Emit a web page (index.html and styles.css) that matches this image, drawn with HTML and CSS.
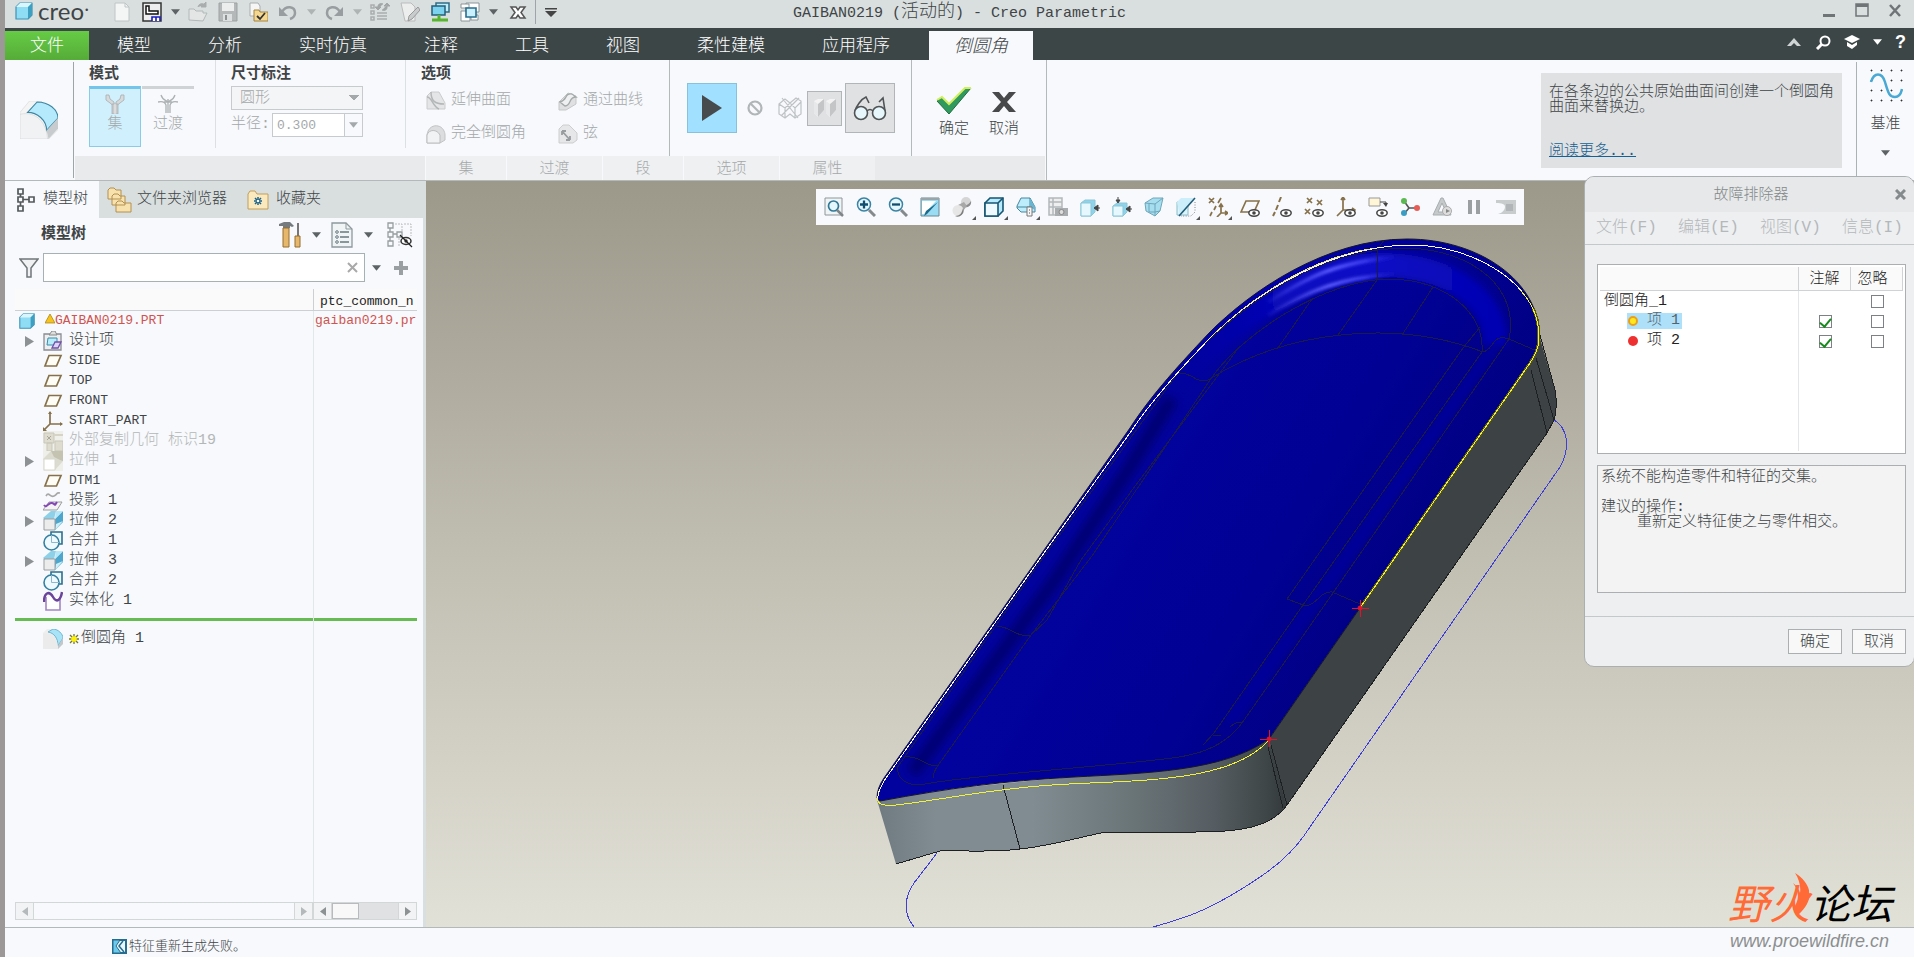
FILE: index.html
```html
<!DOCTYPE html>
<html lang="zh-CN">
<head>
  <meta charset="UTF-8">
  <meta name="viewport" content="width=device-width, initial-scale=1.0">
  <title>GAIBAN0219 (活动的) - Creo Parametric</title>
  <link rel="stylesheet" href="styles.css">
</head>
<body>
  <!-- shared icon symbols -->
  <svg class="defs" width="0" height="0" aria-hidden="true">
    <symbol id="i-caret" viewBox="0 0 10 6"><path d="M0 0h10L5 6z" fill="currentColor"/></symbol>
    <symbol id="i-expand" viewBox="0 0 9 11"><path d="M0 0l9 5.500L0 11z" fill="#8d9194"/></symbol>
    <symbol id="i-part" viewBox="0 0 20 20">
      <path d="M2 6l4-4h12v12l-4 4H2z" fill="#8fdcf5" stroke="#3f93b5" stroke-width="1.200" stroke-linejoin="round"/>
      <path d="M2 6l4-4h12l-4 4z" fill="#d9f6ff"/><path d="M14 6l4-4v12l-4 4z" fill="#3f9fc0"/>
    </symbol>
    <symbol id="i-plane" viewBox="0 0 20 20"><path d="M6 4.500h12L13.500 15H2z" fill="#fffdf5" stroke="#86714a" stroke-width="1.700"/></symbol>
    <symbol id="i-extrude" viewBox="0 0 20 20">
      <path d="M0 7L8 0h12v12l-8 8z" fill="#e9f7fc"/><path d="M0 7L8 0h5L11 8H1z" fill="#8ed0e8"/>
      <path d="M20 0L12 8v11l8-8z" fill="#4fa6cc"/><path d="M13 0h7l-8 8z" fill="#b8e8f7"/><path d="M12 19l8-9-7 3z" fill="#cdf1fb"/>
      <path d="M1 8h11v11H1z" fill="#ececec" stroke="#9b9fa2"/>
    </symbol>
    <symbol id="i-merge" viewBox="0 0 20 20">
      <path d="M8 4V1h11v12h-3" fill="#eaf8fd" stroke="#2c6f8c" stroke-width="1.600"/>
      <circle cx="8.500" cy="11.500" r="7.500" fill="#eefaff" stroke="#3680a0" stroke-width="1.600"/>
      <path d="M8.500 4v7.500H16" fill="none" stroke="#8eb9ca"/>
    </symbol>
    <symbol id="i-round" viewBox="0 0 20 20">
      <path d="M0 4L4 0h7l9 8v7l-5 5H0z" fill="#eeeeee"/>
      <path d="M5 3l5-3c5 0 10 5 10 9l-5 8C15 9 11 4 5 3z" fill="#a8e3f8" stroke="#58a9c8" stroke-width=".8"/>
      <path d="M15 17l5-8v6l-5 5z" fill="#c4c8ca"/>
      <path d="M0 5c9-2 15 4 15 15H0z" fill="#ebebec"/>
    </symbol>
    <symbol id="i-eye" viewBox="0 0 12 8"><ellipse cx="6" cy="4" rx="5.200" ry="3.200" fill="#fff" stroke="#444" stroke-width="1.500"/><circle cx="6" cy="4" r="1.800" fill="#444"/></symbol>
  </svg>

  <header class="titlebar">
    <div class="brand">
      <svg class="icon" viewBox="0 0 20 20"><use href="#i-part"/></svg>
      <span class="brand-name">creo</span><span class="brand-dot">•</span>
    </div>
    <nav class="quick" aria-label="快速访问">
      <button aria-label="新建"><svg class="icon" viewBox="0 0 20 20"><path d="M3 1h10l4 4v14H3z" fill="#f4f6f6" stroke="#c0c4c6"/><path d="M13 1v4h4" fill="none" stroke="#c0c4c6"/></svg></button>
      <button aria-label="打开上次"><svg class="icon" viewBox="0 0 20 20"><rect x="1" y="1" width="18" height="18" fill="#eee" stroke="#333" stroke-width="1.500"/><path d="M4 4h3v5h9v3H4z" fill="#fff" stroke="#111" stroke-width="1.500"/><path d="M10 19v-4h8v4M14 15v4" fill="#fff" stroke="#1c1cc0" stroke-width="1.600"/></svg></button>
      <button class="drop" aria-label="更多"><svg class="caret"><use href="#i-caret"/></svg></button>
      <button aria-label="打开"><svg class="icon" viewBox="0 0 20 20"><path d="M1 18V7h5l2 2h7v2h4l-4 8z" fill="#e4e6e6" stroke="#b3b7b8"/><path d="M10 5c1-4 5-4 7-2M18 0v5h-5z" fill="#a9adae" stroke="#a9adae"/></svg></button>
      <button aria-label="保存"><svg class="icon" viewBox="0 0 20 20"><path d="M1 1h18v18H1z" fill="#b4b8b9" stroke="#9da1a2"/><path d="M4 1h12v8H4z" fill="#eceeee"/><path d="M5 12h9v7H5z" fill="#dde0e0"/><path d="M7 13h2v5H7z" fill="#8e9293"/></svg></button>
      <button aria-label="检入"><svg class="icon" viewBox="0 0 20 20"><path d="M2 1h8l2 3v10H2z" fill="#f6f6f6" stroke="#a9adae"/><path d="M6 8h5l1 2h8v9H6z" fill="#f4d891" stroke="#a5843c"/><path d="M9 14l3 3 5-6" fill="none" stroke="#333" stroke-width="1.800"/></svg></button>
      <button aria-label="撤消"><svg class="icon" viewBox="0 0 20 20"><path d="M4 10C8 3 17 4 17 11c0 3-2 5-5 6" fill="none" stroke="#989d9f" stroke-width="2.500"/><path d="M1 5v9h9z" fill="#989d9f"/></svg></button>
      <button class="drop dim" aria-label="撤消列表"><svg class="caret"><use href="#i-caret"/></svg></button>
      <button aria-label="重做"><svg class="icon" viewBox="0 0 20 20"><path d="M16 10C12 3 3 4 3 11c0 3 2 5 5 6" fill="none" stroke="#989d9f" stroke-width="2.500"/><path d="M19 5v9h-9z" fill="#989d9f"/></svg></button>
      <button class="drop dim" aria-label="重做列表"><svg class="caret"><use href="#i-caret"/></svg></button>
      <button aria-label="重新生成"><svg class="icon" viewBox="0 0 20 20"><path d="M1 3h3v3H1zM1 9h3v3H1zM1 15h3v3H1zM7 11h10M7 14h10M7 17h10" fill="none" stroke="#a9adae" stroke-width="1.500"/><path d="M8 7V4c0-2 3-3 5-2M17 3v3c0 2-3 3-5 2M5 5h6L8 8zM14 4h6l-3-3z" fill="#a2a6a7" stroke="#a2a6a7"/></svg></button>
      <button aria-label="编辑"><svg class="icon" viewBox="0 0 20 20"><path d="M1 1h10l4 4v14H5z" fill="#eceeee" stroke="#bbb"/><path d="M8 19l1-5 9-9 2 3-8 9z" fill="#c9cccd" stroke="#999"/></svg></button>
      <button aria-label="窗口"><svg class="icon" viewBox="0 0 20 20"><path d="M6 1h13v9H6z" fill="#bfeefb" stroke="#316d86" stroke-width="1.500"/><path d="M2 4h13v9H2z" fill="#7cd3ef" stroke="#265f79" stroke-width="1.500"/><path d="M9 13v6M2 18h16" stroke="#58b52f" stroke-width="3"/></svg></button>
      <button aria-label="激活窗口"><svg class="icon" viewBox="0 0 20 20"><path d="M6 1h13v9H6zM1 9h9v10H1z" fill="#fff" stroke="#8a9497"/><path d="M1 2h8v4H1zM11 13h7v5h-7z" fill="#fff" stroke="#8a9497"/><path d="M6 6h10v9H6z" fill="#c9f0fc" stroke="#286f8d" stroke-width="1.600"/></svg></button>
      <button class="drop" aria-label="窗口列表"><svg class="caret"><use href="#i-caret"/></svg></button>
      <button class="close-win" aria-label="关闭窗口"><svg class="icon" viewBox="0 0 20 20"><path d="M3 5h5l2 3 2-3h5l-4 5.500 4 5.500h-5l-2-3-2 3H3l4-5.500z" fill="#fff" stroke="#555" stroke-width="1.500"/></svg></button>
      <span class="quick-line"></span>
      <button class="drop" aria-label="自定义"><svg class="caret tall" viewBox="0 0 12 9"><path d="M0 0h12v1.500H0zM0 3h12L6 9z" fill="#444"/></svg></button>
    </nav>
    <h1 class="title">GAIBAN0219 (<span class="cn">活动的</span>) - Creo Parametric</h1>
    <div class="window-buttons">
      <button aria-label="最小化"><svg viewBox="0 0 14 14"><path d="M1 11h12v3H1z" fill="#6f7577"/></svg></button>
      <button aria-label="最大化"><svg viewBox="0 0 14 14"><path d="M1 1h12v12H1z" fill="none" stroke="#6f7577" stroke-width="1.500"/><path d="M1 1h12v3H1z" fill="#6f7577"/></svg></button>
      <button aria-label="关闭"><svg viewBox="0 0 14 14"><path d="M2 2l10 11M12 2L2 13" stroke="#6f7577" stroke-width="2.500"/></svg></button>
    </div>
  </header>

  <nav class="tabs">
    <button class="file-tab">文件</button>
    <button>模型</button><button>分析</button><button>实时仿真</button><button>注释</button><button>工具</button><button>视图</button><button>柔性建模</button><button>应用程序</button>
    <button class="active">倒圆角</button>
    <div class="tab-tools">
      <button aria-label="折叠功能区"><svg viewBox="0 0 16 16"><path d="M1 12l7-8 7 8h-4L8 9l-3 3z" fill="#cfd4d4"/></svg></button>
      <button aria-label="搜索"><svg viewBox="0 0 16 16"><circle cx="10" cy="7" r="4.500" fill="none" stroke="#fff" stroke-width="2"/><path d="M7 10l-5 5" stroke="#fff" stroke-width="3"/></svg></button>
      <button aria-label="学习"><svg viewBox="0 0 16 16"><path d="M8 1l8 4-8 4-8-4zM3 8l5 3 5-3v3l-5 4-5-3z" fill="#fff"/></svg></button>
      <button class="small" aria-label="学习列表"><svg class="caret"><use href="#i-caret"/></svg></button>
      <button class="help" aria-label="帮助">?</button>
    </div>
  </nav>

  <section class="ribbon">
    <div class="ribbon-icon">
      <svg viewBox="0 0 20 20"><path d="M0 6L5 0h6l9 9v6l-5 5H0z" fill="#f4f4f4" stroke="#d5d5d5" stroke-width=".3"/><path d="M4 6l5-5.500c6 0 11 4 11 8.500l-6 6.500C14 10 9 6 4 6z" fill="#b5eafc" stroke="#3e86a3" stroke-width=".6"/><path d="M14 15.500L20 9v5.500L15 20z" fill="#c7cbcd"/><path d="M0 7c9-2 14 5 14.500 13H0z" fill="#f1f2f3" stroke="#cfd1d3" stroke-width=".3"/></svg>
    </div>
    <div class="ribbon-body">
      <div class="groups">
        <div class="group mode">
          <h2>模式</h2>
          <div class="mode-buttons">
            <button class="on"><svg viewBox="0 0 20 20"><path d="M1 1h3l1 4 4 3v4L1 6zM19 1h-3l-1 4-4 3v4l8-6z" fill="#d6dadc" stroke="#a7acaf" stroke-width=".8"/><path d="M7 10h6v10H7z" fill="#c6cacc" stroke="#aaafb2" stroke-width=".8"/><path d="M10 10v10" stroke="#eee"/></svg>集</button>
            <button><svg viewBox="0 0 20 20"><path d="M3 1c2 6 5 5 7 7 2-2 5-1 7-7M0 8c4-1 7 0 8 3v8M20 8c-4-1-7 0-8 3v8M10 5v14M6 8h8" fill="none" stroke="#adb1b3" stroke-width="1.300"/></svg>过渡</button>
          </div>
        </div>
        <div class="group dims">
          <h2>尺寸标注</h2>
          <select class="shape" aria-label="形状" disabled><option>圆形</option></select>
          <div class="radius">
            <label for="radius">半径:</label>
            <input id="radius" type="text" value="0.300" disabled><button aria-label="半径列表" disabled><svg class="caret"><use href="#i-caret"/></svg></button>
          </div>
        </div>
        <div class="group opts">
          <h2>选项</h2>
          <div class="opt-grid">
            <button><svg viewBox="0 0 20 20"><path d="M1 5l4-4h8l6 11v6H1z" fill="#e4e5e6" stroke="#cacccd"/><path d="M5 1c0 9 4 12 13 12M1 6c5 0 6 10 12 12" fill="none" stroke="#b3b7b8" stroke-width="1.500"/></svg>延伸曲面</button>
            <button><svg viewBox="0 0 20 20"><path d="M1 11L10 2l8 3v8l-10 6H1z" fill="#dfe0e1" stroke="#c5c7c8"/><path d="M2 11c8-2 4-9 12-8l4 3c-8 0-4 8-11 9z" fill="#eef0f1" stroke="#a5a9aa" stroke-width="1.300"/></svg>通过曲线</button>
            <button><svg viewBox="0 0 20 20"><path d="M1 11c1-8 7-10 11-9 5 1 7 6 7 9v5l-5 3H1z" fill="#dcddde" stroke="#c1c4c5"/><path d="M1 19v-8c2-6 10-6 13 0v8z" fill="#f1f2f3" stroke="#bbbebf"/></svg>完全倒圆角</button>
            <button><svg viewBox="0 0 20 20"><path d="M1 5l4-4h6l8 8v7l-4 3H1z" fill="#e6e7e8" stroke="#cccecf"/><path d="M4 7l8 9M4 7v4M4 7h4M12 16V12M12 16H8" fill="none" stroke="#999da0" stroke-width="1.800"/></svg>弦</button>
          </div>
        </div>
        <div class="group view">
          <button class="play" aria-label="继续"><svg width="24" height="30" viewBox="0 0 24 30"><path d="M2 2l20 13L2 28z" fill="#474b4d"/></svg></button>
          <button class="bare" aria-label="无预览"><svg width="18" height="18" viewBox="0 0 18 18"><circle cx="9" cy="9" r="6.500" fill="none" stroke="#b1b5b7" stroke-width="2.200"/><path d="M5 5l8 8" stroke="#b1b5b7" stroke-width="2.200"/></svg></button>
          <button class="bare wide" aria-label="分离"><svg width="26" height="24" viewBox="0 0 26 24"><path d="M2 8l6-5 5 4 6-5 5 3v13l-6 4-5-4-5 4-6-4zM2 8l6 4 5-5 5 5 6-6M8 12v10M18 12v10M5 2l16 20M22 2L4 20" fill="none" stroke="#bfc2c4" stroke-width="1.200"/></svg></button>
          <button class="solid" aria-label="连接"><svg width="24" height="20" viewBox="0 0 24 20"><path d="M1 3l4-2h6v11l-6 7-4-4zM13 3l4-2h6v11l-6 7-4-4z" fill="#f3f3f4"/><path d="M5 6l6-5v11l-6 7zM17 6l6-5v11l-6 7z" fill="#c3c5c7"/><path d="M1 3l4 3v13l-4-4zM13 3l4 3v13l-4-4z" fill="#e7e8e9"/></svg></button>
          <button class="glasses" aria-label="预览"><svg width="34" height="26" viewBox="0 0 34 26"><path d="M2 16c1-4 6-12 11-14l3 6M32 16L30 3l-4 4" fill="none" stroke="#4f5355" stroke-width="1.600"/><circle cx="8" cy="18" r="6.500" fill="#e7f6fb" stroke="#4f5355" stroke-width="1.600"/><circle cx="26" cy="18" r="6.500" fill="#e7f6fb" stroke="#4f5355" stroke-width="1.600"/><path d="M14 16c2-2 4-2 6 0" fill="none" stroke="#4f5355" stroke-width="1.600"/></svg></button>
        </div>
        <div class="group finish">
          <button><svg width="36" height="28" viewBox="0 0 36 28"><path d="M1 14l5-4 7 7L29 1h6L13 27z" fill="#2f9a5c" stroke="#1f6e40"/><path d="M1 13l5-3 7 7L29 1h6" fill="none" stroke="#d3ee5c" stroke-width="2"/></svg>确定</button>
          <button><svg width="36" height="28" viewBox="0 0 36 28"><path d="M6 5h7l5 6 5-6h7l-9 10 9 10h-7l-5-6-5 6H6l9-10z" fill="#47494b"/></svg>取消</button>
        </div>
      </div>
      <div class="panels">
        <button>集</button><button class="w2">过渡</button><button>段</button><button class="w2">选项</button><button class="w2">属性</button>
      </div>
    </div>
    <aside class="tip">
      <p>在各条边的公共原始曲面间创建一个倒圆角曲面来替换边。</p>
      <a href="#">阅读更多...</a>
    </aside>
    <button class="datum">
      <svg class="datum-icon" viewBox="0 0 34 36"><path d="M2 2h1v1H2zM12 2h1v1h-1zM22 2h1v1h-1zM32 2h1v1h-1zM2 12h1v1H2zM22 12h1v1h-1zM32 12h1v1h-1zM2 22h1v1H2zM12 22h1v1h-1zM22 22h1v1h-1zM2 32h1v1H2zM12 32h1v1h-1zM22 32h1v1h-1zM32 32h1v1h-1z" fill="#333" stroke="#333" stroke-width=".8"/><path d="M2 14C5 4 13 4 16 14s4 15 10 15c4 0 6-3 7-8" fill="none" stroke="#49a9d4" stroke-width="2.500"/></svg>
      基准
      <svg class="caret"><use href="#i-caret"/></svg>
    </button>
  </section>

  <main class="main">
    <section class="side">
      <nav class="side-tabs">
        <button class="active"><svg width="20" height="26" viewBox="0 0 20 26"><path d="M2 2h5v5H2zM2 10h5v5H2zM2 19h5v5H2zM13 10h5v5h-5zM4.500 7v3M4.500 15v4M7 12.500h6" fill="none" stroke="#55595b" stroke-width="1.700"/></svg>模型树</button>
        <button class="folders"><svg width="25" height="26" viewBox="0 0 25 26"><path d="M1 3l2-2h4l2 2h5v9H1zM5 9l2-2h4l2 2h5v9H5zM9 16l2-2h4l2 2h7v9H9z" fill="#f7e2ae" stroke="#b3904f"/></svg>文件夹浏览器</button>
        <button class="fav"><svg width="22" height="22" viewBox="0 0 22 22"><path d="M1 5l2-3h5l2 3h11v15H1z" fill="#fae9bf" stroke="#c39d57"/><path d="M11 8v8M7 12h8M8 9l6 6M14 9l-6 6" stroke="#1a6287" stroke-width="1.500"/><circle cx="11" cy="12" r="1.300" fill="#fff"/></svg>收藏夹</button>
      </nav>
      <div class="side-head">
        <h2>模型树</h2>
        <button aria-label="设置"><svg width="22" height="26" viewBox="0 0 22 26"><path d="M0 2l5-2h6l4 4-2 1-2-1v2H4V4H0z" fill="#757b7e"/><path d="M4 6h6v19H4z" fill="#e7b86c" stroke="#966c2e"/><path d="M18 1h2v14h-2z" fill="#777"/><path d="M16 14h5v11h-5z" fill="#e7b86c" stroke="#966c2e"/></svg></button>
        <button class="drop" aria-label="设置列表"><svg class="caret"><use href="#i-caret"/></svg></button>
        <button aria-label="显示"><svg width="22" height="26" viewBox="0 0 22 26"><path d="M1 1h14l6 6v18H1z" fill="#f0f4f5" stroke="#8d999d" stroke-width="1.300"/><path d="M15 1v6h6" fill="none" stroke="#8d999d"/><path d="M9 10h9M9 15h9M9 20h9" stroke="#64787f" stroke-width="1.300"/><circle cx="6" cy="10" r="1.300" fill="none" stroke="#64787f"/><circle cx="6" cy="15" r="1.300" fill="none" stroke="#64787f"/><circle cx="6" cy="20" r="1.300" fill="none" stroke="#64787f"/></svg></button>
        <button class="drop" aria-label="显示列表"><svg class="caret"><use href="#i-caret"/></svg></button>
        <button class="hide" aria-label="隐藏"><svg width="26" height="26" viewBox="0 0 26 26"><path d="M1 1h5v5H1zM1 10h5v5H1zM1 19h5v5H1zM10 10h5v5h-5zM3 6v4M3 15v4M6 12h4" fill="none" stroke="#989d9f" stroke-width="1.300"/><path d="M8 2h7v7M17 2h7v12M12 16v8" fill="none" stroke="#bbb" stroke-dasharray="2 1"/><ellipse cx="19" cy="19" rx="5" ry="3.500" fill="#fff" stroke="#333" stroke-width="1.500"/><circle cx="19" cy="19" r="1.700" fill="#333"/><path d="M13 13l12 12" stroke="#222" stroke-width="1.300"/></svg></button>
      </div>
      <div class="filter">
        <svg class="funnel" viewBox="0 0 20 20"><path d="M1 1h18l-7 9v9H8v-9z" fill="#f0f1f2" stroke="#6f7678" stroke-width="1.500"/></svg>
        <div class="search"><input type="text" aria-label="搜索模型树"><button aria-label="清除"><svg width="11" height="11" viewBox="0 0 11 11"><path d="M1 1l9 9M10 1l-9 9" stroke="#a9a9a9" stroke-width="2"/></svg></button></div>
        <button class="drop" aria-label="过滤列表"><svg class="caret"><use href="#i-caret"/></svg></button>
        <button class="plus" aria-label="添加"><svg width="14" height="14" viewBox="0 0 14 14"><path d="M5 0h4v5h5v4H9v5H5V9H0V5h5z" fill="#9a9fa1"/></svg></button>
      </div>
      <table class="tree">
        <thead><tr><th></th><th>ptc_common_n</th></tr></thead>
        <tbody>
          <tr class="root"><td><div><svg class="icon"><use href="#i-part"/></svg><svg class="warn" viewBox="0 0 10 14"><path d="M5 0l5 9H0z" fill="#f6c21c" stroke="#a57b0b" stroke-width=".7"/></svg>GAIBAN0219.PRT</div></td><td>gaiban0219.pr</td></tr>
          <tr><td><div><svg class="expand"><use href="#i-expand"/></svg><svg class="icon" viewBox="0 0 20 20"><path d="M1 3h17v16H1z" fill="#eee" stroke="#8b8b94" stroke-width="1.300"/><path d="M6 4l3-4h3l2 4z" fill="#ddd" stroke="#888"/><path d="M5 7h9v7H4z" fill="#b9ecfa" stroke="#388cab"/><path d="M9 17l3-6h6l-3 6z" fill="#ddd3f3" stroke="#7150ad" stroke-width="1.300"/></svg>设计项</div></td><td></td></tr>
          <tr class="latin"><td><div><svg class="icon"><use href="#i-plane"/></svg>SIDE</div></td><td></td></tr>
          <tr class="latin"><td><div><svg class="icon"><use href="#i-plane"/></svg>TOP</div></td><td></td></tr>
          <tr class="latin"><td><div><svg class="icon"><use href="#i-plane"/></svg>FRONT</div></td><td></td></tr>
          <tr class="latin"><td><div><svg class="icon" viewBox="0 0 20 20"><path d="M7 1v12h12M7 13l-6 6" fill="none" stroke="#86714a" stroke-width="1.700"/><path d="M5 3l2-3 2 3zM17 11l3 2-3 2zM0 16v4h4z" fill="#86714a"/></svg>START_PART</div></td><td></td></tr>
          <tr class="off"><td><div><svg class="icon" viewBox="0 0 20 20"><path d="M0 0h20v20H0z" fill="#f0f0ea"/><path d="M1 2h10v10H1zM12 10h8v10h-8zM4 12h5v8H4z" fill="#dddccf" stroke="#c9c7b9"/><path d="M11 4h9" stroke="#d6d4c6" stroke-width="2"/><path d="M4 5l4 4M8 5L4 9" stroke="#aaa89b"/></svg>外部复制几何 标识19</div></td><td></td></tr>
          <tr class="off"><td><div><svg class="expand"><use href="#i-expand"/></svg><svg class="icon" viewBox="0 0 20 20"><path d="M0 0h20v20H0z" fill="#efefe9"/><path d="M0 8l8-8h12v10l-8 9z" fill="#dcdbcf"/><path d="M8 0h12v10l-3-1-6-3z" fill="#c4c2b1"/><path d="M1 8h11v11H1z" fill="#fff" stroke="#d8d7cc"/></svg>拉伸 1</div></td><td></td></tr>
          <tr class="latin"><td><div><svg class="icon"><use href="#i-plane"/></svg>DTM1</div></td><td></td></tr>
          <tr><td><div><svg class="icon" viewBox="0 0 20 20"><path d="M3 5c3-5 4 2 8 0s2-4 6-3" fill="none" stroke="#a7a7a7" stroke-width="1.700"/><path d="M6 11h13l-5 8H0z" fill="#f4f4f4" stroke="#9c9c9c"/><path d="M1 14c3 4 4-3 8-2s2 4 5-1" fill="none" stroke="#8447b5" stroke-width="2"/></svg>投影 1</div></td><td></td></tr>
          <tr><td><div><svg class="expand"><use href="#i-expand"/></svg><svg class="icon"><use href="#i-extrude"/></svg>拉伸 2</div></td><td></td></tr>
          <tr><td><div><svg class="icon"><use href="#i-merge"/></svg>合并 1</div></td><td></td></tr>
          <tr><td><div><svg class="expand"><use href="#i-expand"/></svg><svg class="icon"><use href="#i-extrude"/></svg>拉伸 3</div></td><td></td></tr>
          <tr><td><div><svg class="icon"><use href="#i-merge"/></svg>合并 2</div></td><td></td></tr>
          <tr><td><div><svg class="icon" viewBox="0 0 20 20"><path d="M3 6v13h14V6" fill="#fff" stroke="#a285c2" stroke-width="1.600"/><path d="M1 11c0-9 5-12 9-5s8 2 9-5" fill="none" stroke="#69449a" stroke-width="2.500"/></svg>实体化 1</div></td><td></td></tr>
          <tr class="insert"><td><span></span></td><td><span></span></td></tr>
          <tr><td><div><svg class="icon"><use href="#i-round"/></svg><svg class="star" viewBox="0 0 10 10"><path d="M5 0v10M0 5h10M1 1l8 8M9 1L1 9" stroke="#77752a" stroke-width="1.300"/><circle cx="5" cy="5" r="2.800" fill="#fff200"/></svg>倒圆角 1</div></td><td></td></tr>
          <tr class="rest"><td></td><td></td></tr>
        </tbody>
      </table>
      <div class="scrolls">
        <div class="scroll name-scroll"><button aria-label="向左" disabled><svg viewBox="0 0 6 9"><path d="M6 0v9L0 4.500z" fill="#b5b9bb"/></svg></button><i></i><button aria-label="向右" disabled><svg viewBox="0 0 6 9"><path d="M0 0v9l6-4.500z" fill="#b5b9bb"/></svg></button></div>
        <div class="scroll col-scroll"><button aria-label="向左"><svg viewBox="0 0 6 9"><path d="M6 0v9L0 4.500z" fill="#8d9193"/></svg></button><i><b></b></i><button aria-label="向右"><svg viewBox="0 0 6 9"><path d="M0 0v9l6-4.500z" fill="#8d9193"/></svg></button></div>
      </div>
    </section>

    <section class="viewport">
      <svg class="model" viewBox="426 181 1488 746" preserveAspectRatio="xMidYMid meet" role="img" aria-label="GAIBAN0219">
        <defs>
          <linearGradient id="front" x1="878" y1="0" x2="1287" y2="0" gradientUnits="userSpaceOnUse">
            <stop offset="0" stop-color="#6f7b80"/><stop offset=".14" stop-color="#808c92"/><stop offset=".38" stop-color="#818c92"/><stop offset=".62" stop-color="#6a7578"/><stop offset=".82" stop-color="#565d62"/><stop offset=".95" stop-color="#3f4647"/><stop offset="1" stop-color="#33393a"/>
          </linearGradient>
          <linearGradient id="top" x1="1100" y1="500" x2="1400" y2="680" gradientUnits="userSpaceOnUse">
            <stop offset="0" stop-color="#02029e"/><stop offset=".5" stop-color="#010194"/><stop offset="1" stop-color="#00007e"/>
          </linearGradient>
          <linearGradient id="rim" x1="1180" y1="0" x2="1510" y2="0" gradientUnits="userSpaceOnUse">
            <stop offset="0" stop-color="#0000b4" stop-opacity="0"/><stop offset=".35" stop-color="#0a0ac0"/><stop offset=".55" stop-color="#0c0cc8"/><stop offset="1" stop-color="#0303b0"/>
          </linearGradient>
          <linearGradient id="shine" x1="1260" y1="0" x2="1400" y2="0" gradientUnits="userSpaceOnUse">
            <stop offset="0" stop-color="#5a5aff" stop-opacity="0"/><stop offset=".5" stop-color="#5a5aff"/><stop offset=".75" stop-color="#3c3cf0"/><stop offset="1" stop-color="#1a1ad4" stop-opacity="0"/>
          </linearGradient>
          <filter id="soft" filterUnits="userSpaceOnUse" x="860" y="220" width="720" height="620"><feGaussianBlur stdDeviation="5"/></filter>
          <filter id="glow" filterUnits="userSpaceOnUse" x="860" y="220" width="720" height="620"><feGaussianBlur stdDeviation="3"/></filter>
          <filter id="line-glow" filterUnits="userSpaceOnUse" x="860" y="220" width="720" height="620"><feGaussianBlur stdDeviation="1.500"/></filter>
          <clipPath id="face"><path d="M877 798Q877 788 884 778L1037 560L1130 428C1148 400 1172 372 1210 332C1250 292 1325 239 1407 239C1480 239 1539 282 1539 335Q1539 350 1530 363L1269 739C1222 772 1145 773 1074 777S950 788 880 801Z"/></clipPath>
        </defs>

        <!-- curve projected below the part -->
        <path class="sketch" d="M1554 420C1566 427 1572 445 1560 467L1310 827C1294 852 1276 868 1240 890S1185 918 1153 927M937 853L914 883C904 898 903 913 914 927"/>

        <!-- right and front walls -->
        <path d="M1269 739L1530 363Q1539 350 1539 335L1555 390Q1558 408 1554 420L1547 433L1287 805L1283 808Z" fill="#3d4244"/>
        <path class="edge" d="M1540 335L1555 390Q1558 408 1554 420L1547 433L1287 805M1531 370L1547 433M1536 358L1554 420"/>
        <path d="M877 800C950 788 1003 783 1074 777S1222 772 1269 739L1286 806C1272 826 1245 832 1196 832H1106C1080 837 1050 846 1020 849C990 853 960 850 940 851L896 864Z" fill="url(#front)"/>
        <path class="edge" d="M896 864L940 851C960 850 990 853 1020 849C1050 846 1080 837 1106 832H1196C1245 832 1272 826 1287 805M1003 785L1020 849M1268 747L1283 808M1271 745L1287 805"/>

        <!-- top face -->
        <path d="M877 798Q877 788 884 778L1037 560L1130 428C1148 400 1172 372 1210 332C1250 292 1325 239 1407 239C1480 239 1539 282 1539 335Q1539 350 1530 363L1269 739C1222 772 1145 773 1074 777S950 788 880 801Z" fill="url(#top)" stroke="#14142a"/>
        <g clip-path="url(#face)">
          <path d="M912 773L1053 583L1130 467L1172 398" fill="none" stroke="#000072" stroke-width="14" filter="url(#soft)"/>
          <path d="M1174 384C1225 322 1310 266 1378 265C1450 264 1498 300 1495 345" fill="none" stroke="url(#rim)" stroke-width="24" filter="url(#glow)"/>
          <path d="M1268 302C1310 276 1335 263 1395 257M1268 315C1310 290 1340 278 1395 274" fill="none" stroke="url(#shine)" stroke-width="4" filter="url(#line-glow)"/>
          <path d="M1495 345L1315 602L1230 722" fill="none" stroke="#00009c" stroke-width="8" filter="url(#glow)"/>
        </g>

        <g class="inner">
          <path d="M1178 373C1225 318 1310 248 1407 248C1475 250 1520 290 1509 339L1333 593L1242 723C1215 760 1165 758 1146 761C1060 770 980 775 931 783Q900 790 897 768L1040 562L1178 373"/>
          <path d="M1210 380C1240 335 1325 279 1390 279C1445 280 1485 312 1482 352L1303 605L1214 733L1203 745"/>
          <path d="M1208 380C1290 328 1400 320 1483 352C1494 350 1492 333 1509 339L1537 351M1178 373C1193 372 1195 384 1208 380"/>
          <path d="M1312 299L1278 348M1377 280L1338 335M1433 287L1402 335M1480 327L1463 348L1287 599M1377 250L1378 280M1384 240L1377 250"/>
          <path d="M1287 599L1306 606C1318 604 1320 591 1332 592L1360 604M1237 350L1130 493L1081 560L1047 620L1031 635L939 764Q934 770 933 778M1210 380L1092 556L1031 635"/>
          <path d="M997 626C1012 627 1017 638 1030 635M906 757C920 755 925 768 939 765M1213 735H1221M1230 727Q1238 720 1243 723"/>
        </g>

        <!-- selected edge chain -->
        <path class="chain-back" d="M1533 308Q1539 320 1539 338Q1539 350 1530 363L1360 608"/>
        <path class="chain-far" d="M878 798Q877 792 886 778L1039 560L1132 430C1150 403 1176 373 1213 335C1262 288 1335 246 1410 245C1465 245 1510 272 1528 300"/>
        <path class="chain-mid" d="M1213 335C1262 288 1320 256 1375 248"/>
        <path class="chain" d="M1520 290Q1539 310 1539 338Q1539 350 1530 363L1360 608M1269 740C1228 787 1119 779 1039 786C980 791 940 800 896 805Q876 807 878 798"/>
        <g class="cross"><path d="M1352 608h17M1360 600v17M1260 739h17M1269 730v17"/><circle cx="1360" cy="608" r="2"/><circle cx="1269" cy="739" r="2"/></g>
      </svg>

      <div class="view-tools">
        <button aria-label="重新调整"><svg class="icon" viewBox="0 0 20 20"><path d="M1 1h17v17H1z" fill="#f1f4f5" stroke="#8f9699"/><circle cx="9.500" cy="9" r="5" fill="#e3f7fd" stroke="#2f7898" stroke-width="1.700"/><path d="M13 13l6 6" stroke="#80858a" stroke-width="2.500"/></svg></button>
        <button aria-label="放大"><svg class="icon" viewBox="0 0 20 20"><circle cx="8" cy="7.500" r="6.500" fill="#e3f7fd" stroke="#3b83a3" stroke-width="1.500"/><path d="M13 13l6 6" stroke="#85898c" stroke-width="3"/><path d="M4 7.500h8M8 3.500v8" stroke="#114e6d" stroke-width="2.300"/></svg></button>
        <button aria-label="缩小"><svg class="icon" viewBox="0 0 20 20"><circle cx="8" cy="7.500" r="6.500" fill="#e3f7fd" stroke="#3b83a3" stroke-width="1.500"/><path d="M13 13l6 6" stroke="#85898c" stroke-width="3"/><path d="M4 7.500h8" stroke="#114e6d" stroke-width="2.300"/></svg></button>
        <button aria-label="重画"><svg class="icon" viewBox="0 0 20 20"><path d="M1 1h18v18H1z" fill="#9adcf3" stroke="#6b8792"/><path d="M2 4h14L4 17H2z" fill="#fff"/><path d="M1 1h18v2H1z" fill="#9aa5a9"/><path d="M18 5L7 17l-3 2 2-5z" fill="#1d6a8c"/></svg></button>
        <button class="more" aria-label="渲染"><svg class="icon" viewBox="0 0 20 20"><circle cx="14" cy="5" r="5" fill="#d5d5d5"/><path d="M19 4a5 5 0 0 1-6 6l-2-2c4 1 6-1 8-4z" fill="#8c8c8c"/><path d="M6 8l6-3 3 4-4 5z" fill="#a8a8a8"/><circle cx="6" cy="13.500" r="5.500" fill="#e6e6e6"/><path d="M11 11a6 6 0 0 1-8 8c5 0 7-3 8-8z" fill="#7d7d7d"/></svg></button>
        <button class="more" aria-label="显示样式"><svg class="icon" viewBox="0 0 20 20"><path d="M1 6l5-5h13v13l-5 5H1z" fill="#b7eafa" stroke="#175673" stroke-width="1.600"/><path d="M1 6h13v13H1zM14 6l5-5" fill="#eefaff" stroke="#175673" stroke-width="1.600"/></svg></button>
        <button class="more" aria-label="已保存方向"><svg class="icon" viewBox="0 0 20 20"><path d="M5 1h9l5 9v5H5l-4-4V9z" fill="#bdecfa" stroke="#47879f"/><path d="M1 10h13l5 1M14 1v9" fill="none" stroke="#47879f"/><path d="M14 1l5 9v3l-5-3z" fill="#6ab6d2"/><path d="M11 10h5v9h-5z" fill="#f7f7f7" stroke="#777"/><path d="M13 13h1M13 16h1" stroke="#555"/></svg></button>
        <button aria-label="视图管理器"><svg class="icon" viewBox="0 0 20 20"><path d="M1 1h13v17H1zM1 5h13M1 10h13M5 1v17" fill="#eee" stroke="#b4b8ba" stroke-width="1.500"/><path d="M7 11h13v8H7z" fill="#a9adaf"/><circle cx="13.500" cy="15" r="2.500" fill="#ddd" stroke="#888"/></svg></button>
        <button aria-label="截面"><svg class="icon" viewBox="0 0 20 20"><path d="M1 6l4-3h10v12l-4 4H1z" fill="#8fd3ea" stroke="#8cc5d8"/><path d="M1 6h10v13H1z" fill="#e6f8fe" stroke="#8cc5d8"/><path d="M20 11h-3M18 8l-4 3 4 3z" fill="#444" stroke="#444"/></svg></button>
        <button aria-label="截面 2"><svg class="icon" viewBox="0 0 20 20"><path d="M1 9l4-3h10v9l-4 4H1z" fill="#8fd3ea" stroke="#8cc5d8"/><path d="M1 9h10v10H1z" fill="#e6f8fe" stroke="#8cc5d8"/><path d="M20 12h-3M18 9l-4 3 4 3zM6 0v3M4 3l2 3 2-3z" fill="#444" stroke="#444"/></svg></button>
        <button aria-label="透视图"><svg class="icon" viewBox="0 0 20 20"><path d="M1 6l8-5h10l-3 13-5 5-9-5z" fill="#a6ddef" stroke="#6fa6ba"/><path d="M1 6l10 1 8-6M11 7v12M5 7v8h6l5-1" fill="none" stroke="#6fa6ba"/></svg></button>
        <button class="more" aria-label="隐藏线"><svg class="icon" viewBox="0 0 20 20"><path d="M1 5h11v13H1z" fill="#dcf5fc" stroke="#8abccc"/><path d="M1 5l4-4h13L4 18" fill="#cbeefa"/><path d="M19 5v10l-4 4H5" fill="none" stroke="#888" stroke-dasharray="1 1.500"/><path d="M19 1L3 19" stroke="#205b77" stroke-width="1.600"/></svg></button>
        <button class="more" aria-label="基准显示"><svg class="icon" viewBox="0 0 20 20"><path d="M1 1l5 5M6 1L1 6M13 1l-3 5M8 9l-2 4M4 15l-2 4M13 8v8h6M13 16l-4 4M11 10l2-3 2 3M17 14l3 2-3 2" fill="none" stroke="#86714a" stroke-width="1.700"/></svg></button>
        <button aria-label="平面显示"><svg class="icon" viewBox="0 0 20 20"><path d="M6 4h13l-5 11H1z" fill="none" stroke="#86714a" stroke-width="1.700"/><use href="#i-eye" x="8" y="12" width="12" height="8"/></svg></button>
        <button aria-label="轴显示"><svg class="icon" viewBox="0 0 20 20"><path d="M9 0L7 5M6 8l-2 5M3 15l-2 4" stroke="#86714a" stroke-width="2"/><use href="#i-eye" x="8" y="12" width="12" height="8"/></svg></button>
        <button aria-label="点显示"><svg class="icon" viewBox="0 0 20 20"><path d="M3 1l5 5M8 1L3 6M13 3l5 5M18 3l-5 5M1 12l5 5M6 12l-5 5" stroke="#86714a" stroke-width="1.700"/><use href="#i-eye" x="8" y="12" width="12" height="8"/></svg></button>
        <button aria-label="坐标系显示"><svg class="icon" viewBox="0 0 20 20"><path d="M7 1v12h12M7 13l-6 6M5 3l2-3 2 3M16 11l3 2-3 2" fill="none" stroke="#86714a" stroke-width="1.700"/><use href="#i-eye" x="8" y="12" width="12" height="8"/></svg></button>
        <button aria-label="注释显示"><svg class="icon" viewBox="0 0 20 20"><path d="M1 1h11v8H1z" fill="#fff6d8" stroke="#999"/><path d="M12 5h6v2" fill="none" stroke="#444"/><path d="M15 6l3 4 2-4z" fill="#444"/><use href="#i-eye" x="8" y="12" width="12" height="8"/></svg></button>
        <button aria-label="旋转中心"><svg class="icon" viewBox="0 0 20 20"><path d="M4 4l5 7-5 6M9 11h8" fill="none" stroke="#555" stroke-width="1.600"/><circle cx="4" cy="4" r="3" fill="#5bb853"/><circle cx="4" cy="16" r="3" fill="#3a9ec4"/><circle cx="17" cy="11" r="3" fill="#e45e57"/></svg></button>
        <button aria-label="仿真"><svg class="icon" viewBox="0 0 20 20"><path d="M9 1h2l8 17H1zM10 6l-4 9h8z" fill="#c6c9ca" fill-rule="evenodd" stroke="#a9adaf"/><circle cx="15" cy="14" r="4.500" fill="#ddd" stroke="#aaa"/><path d="M14 12l4 2-4 2z" fill="#888"/></svg></button>
        <button aria-label="暂停"><svg class="icon" viewBox="0 0 20 20"><path d="M4 3h4v14H4zM12 3h4v14h-4z" fill="#9b9fa1"/></svg></button>
        <button aria-label="结束"><svg class="icon" viewBox="0 0 20 20"><path d="M0 3h20v14H2c4-1 7-4 7-7s-3-4-9-4z" fill="#c9cccd"/><path d="M10 7h7v7h-7z" fill="#b2b5b7"/></svg></button>
      </div>
    </section>
  </main>

  <footer class="status">
    <svg width="15" height="15" viewBox="0 0 15 15"><path d="M1 1h13v13H1z" fill="#e9f7fc" stroke="#276d8f" stroke-width="2"/><path d="M1 1h7L4 7l5 7H1z" fill="#6ccaed" stroke="#276d8f"/><path d="M11 2L7 7l5 6" fill="none" stroke="#276d8f" stroke-width="1.500"/></svg>
    特征重新生成失败。
  </footer>

  <section class="dialog" role="dialog" aria-label="故障排除器">
    <div class="dialog-title"><h2>故障排除器</h2><button aria-label="关闭"><svg width="11" height="11" viewBox="0 0 11 11"><path d="M1 1l9 9M10 1l-9 9" stroke="#858a8c" stroke-width="3"/></svg></button></div>
    <div class="menu"><button disabled>文件(F)</button><button disabled>编辑(E)</button><button disabled>视图(V)</button><button disabled>信息(I)</button></div>
    <div class="dialog-body">
      <table class="issues">
        <thead><tr><th></th><th>注解</th><th>忽略</th></tr></thead>
        <tbody>
          <tr><td>倒圆角_1</td><td></td><td><input type="checkbox" aria-label="忽略 倒圆角_1"></td></tr>
          <tr><td class="child"><span class="picked"><i class="dot yellow"></i>项 1</span></td><td><input type="checkbox" aria-label="注解 项 1" checked></td><td><input type="checkbox" aria-label="忽略 项 1"></td></tr>
          <tr><td class="child"><span><i class="dot red"></i>项 2</span></td><td><input type="checkbox" aria-label="注解 项 2" checked></td><td><input type="checkbox" aria-label="忽略 项 2"></td></tr>
          <tr class="rest"><td></td><td></td><td></td></tr>
        </tbody>
      </table>
      <textarea class="message" aria-label="说明" readonly>
系统不能构造零件和特征的交集。

建议的操作:
    重新定义特征使之与零件相交。</textarea>
    </div>
    <div class="dialog-foot"><button>确定</button><button>取消</button></div>
  </section>

  <div class="watermark">
    <div class="mark"><span>野火</span>论坛<svg class="flame" viewBox="0 0 18 42"><path d="M4 0c13 8 18 20 12 31-2 4-5 7-9 11l-5-6c5-7 8-15 0-26 4 3 6 6 7 10C10 13 8 6 4 0z" fill="#ff6a36"/></svg></div>
    <div class="url">www.proewildfire.cn</div>
  </div>
</body>
</html>
```
FILE: styles.css
```css
:root {
  --bg: #f7f9fc;
  --bar: #d9dfdf;
  --dark: #3d4647;
  --text: #404446;
  --dim: #a4a8aa;
  --line: #b3b9ba;
  --green: #66bb52;
}

* {
  box-sizing: border-box;
}

body {
  margin: 0;
  height: 100vh;
  display: flex;
  flex-direction: column;
  position: relative;
  overflow: hidden;
  border-left: 5px solid #9c9898;
  background: var(--bg);
  color: var(--text);
  font-family: "Liberation Mono", "Noto Sans CJK SC", monospace;
  font-size: 15px;
  font-weight: 300;
  line-height: 18px;
}

h1, h2, p {
  margin: 0;
  font-size: 15px;
}

button {
  display: flex;
  align-items: center;
  justify-content: center;
  padding: 0;
  border: 0;
  background: none;
  color: inherit;
  font: inherit;
  white-space: nowrap;
}

input, select, textarea {
  font: inherit;
  color: inherit;
  border-radius: 0;
  outline: none;
}

svg {
  flex: none;
}

.defs {
  position: absolute;
}

.icon {
  width: 20px;
  height: 20px;
}

.caret {
  width: 9px;
  height: 6px;
  color: #5d6365;
}

.caret.tall {
  width: 12px;
  height: 9px;
}

.dim .caret {
  color: #aeb3b4;
}

/* title bar */
.titlebar {
  height: 28px;
  flex: none;
  display: flex;
  align-items: center;
  background: var(--bar);
  position: relative;
}

.brand {
  width: 102px;
  padding: 0 0 6px 9px;
  display: flex;
  align-items: center;
}

.brand-name {
  margin-left: 4px;
  font-family: Lato, sans-serif;
  font-size: 24px;
  font-weight: 400;
  line-height: 20px;
}

.brand-dot {
  font-size: 9px;
  line-height: 20px;
}

.quick {
  display: flex;
  align-items: center;
  padding-bottom: 4px;
}

.quick button {
  width: 30px;
}

.quick .drop {
  width: 16px;
}

.quick .close-win {
  width: 34px;
}

.quick-line {
  width: 1px;
  height: 24px;
  margin: 0 7px 0 0;
  background: #9fa5a6;
}

.title {
  position: absolute;
  left: 0;
  right: 0;
  top: 3px;
  text-align: center;
  font-weight: 300;
  pointer-events: none;
}

.title .cn {
  font-size: 18px;
}

.window-buttons {
  margin-left: auto;
  padding: 0 12px 8px 0;
  display: flex;
  gap: 19px;
}

.window-buttons svg {
  width: 14px;
  height: 14px;
}

/* ribbon tabs */
.tabs {
  height: 32px;
  flex: none;
  display: flex;
  align-items: flex-end;
  background: var(--dark);
  color: #fff;
  font-size: 17px;
}

.tabs > button {
  height: 29px;
  padding: 2px 29px 0 28px;
}

.tabs .file-tab {
  width: 84px;
  padding: 2px 0 0;
  background: linear-gradient(#66cb45, #55ac38);
}

.tabs .active {
  width: 104px;
  margin-left: 10px;
  padding: 2px 0 0;
  background: var(--bg);
  color: var(--text);
  font-size: 18px;
  font-style: italic;
}

.tab-tools {
  margin-left: auto;
  height: 32px;
  padding: 0 8px 4px 0;
  display: flex;
  align-items: center;
  gap: 13px;
}

.tab-tools svg {
  width: 16px;
  height: 16px;
}

.tab-tools .caret {
  width: 9px;
  height: 6px;
  color: #fff;
}

.tab-tools .help {
  font: bold 18px "Liberation Sans", sans-serif;
}

/* ribbon */
.ribbon {
  height: 121px;
  flex: none;
  display: flex;
  border-bottom: 1px solid var(--line);
}

.ribbon-icon {
  width: 69px;
  margin: 2px 0;
  display: flex;
  align-items: center;
  justify-content: center;
  border-right: 1px solid #9ea5a6;
}

.ribbon-icon svg {
  width: 38px;
  height: 38px;
}

.ribbon-body {
  display: flex;
  flex-direction: column;
  border-right: 1px solid #b4b9ba;
}

.groups {
  flex: 1;
  display: flex;
}

.group {
  position: relative;
  padding: 6px 0 0 15px;
}

.group h2 {
  margin-bottom: 2px;
}

.mode, .dims {
  margin-bottom: 8px;
  border-right: 1px solid #dde0e2;
}

.mode {
  width: 142px;
}

.mode-buttons {
  display: flex;
  gap: 1px;
}

.mode-buttons button {
  width: 52px;
  height: 61px;
  flex-direction: column;
  justify-content: flex-start;
  gap: 2px;
  padding-top: 5px;
  border-top: 3px solid #d0d3d5;
  color: var(--dim);
}

.mode-buttons svg {
  width: 20px;
  height: 20px;
}

.mode-buttons .on {
  border: 1px solid #8ccbe6;
  border-top: 3px solid #74c5ea;
  background: #d0f0fd;
}

.dims {
  width: 190px;
}

.shape {
  display: block;
  width: 132px;
  height: 24px;
  padding: 2px 8px 0;
  border: 1px solid #c8cbcd;
  color: var(--dim);
  opacity: 1;
  appearance: none;
  background: linear-gradient(to bottom left, var(--dim) 50%, transparent 50%) no-repeat right 8px center / 5px 6px, linear-gradient(to bottom right, var(--dim) 50%, transparent 50%) no-repeat right 3px center / 5px 6px, #f4f5f6;
}

.radius {
  display: flex;
  align-items: center;
  width: 132px;
  margin-top: 3px;
  color: var(--dim);
}

.radius input {
  min-width: 0;
  flex: 1;
  height: 24px;
  margin-left: 2px;
  padding: 0 4px;
  border: 1px solid #c8cbcd;
  background: #fff;
  font-size: 13px;
}

.radius button {
  width: 18px;
  height: 24px;
  border: 1px solid #c8cbcd;
  border-left: 0;
}

.radius .caret {
  color: var(--dim);
}

.opts {
  width: 264px;
  border-right: 1px solid #b4b9ba;
}

.opt-grid {
  display: grid;
  grid-template-columns: 132px 100px;
  grid-auto-rows: 33px;
  padding-left: 5px;
}

.opt-grid button {
  justify-content: flex-start;
  gap: 5px;
  height: 30px;
  color: var(--dim);
}

.opt-grid svg {
  width: 20px;
  height: 20px;
}

.view {
  width: 242px;
  display: flex;
  align-items: center;
  padding: 0 0 0 17px;
  border-right: 1px solid #b4b9ba;
}

.play, .glasses {
  width: 50px;
  height: 50px;
  border: 1px solid #b2b5b7;
  background: #e0e1e3;
}

.play {
  border-color: #86c2dd;
  background: #a1e0fe;
}

.bare {
  width: 36px;
}

.bare.wide {
  width: 34px;
}

.solid {
  width: 35px;
  height: 35px;
  margin-right: 3px;
  border: 1px solid #b2b5b7;
  background: #e0e1e3;
}

.finish {
  width: 134px;
  display: flex;
  padding: 27px 0 0 17px;
}

.finish button {
  width: 50px;
  height: 51px;
  flex-direction: column;
  gap: 6px;
}

.panels {
  height: 24px;
  display: flex;
  gap: 1px;
  margin: 0 1px;
  padding-left: 351px;
  background: linear-gradient(#e9eaeb, #e9eaeb) no-repeat 0 0 / 350px 100%, linear-gradient(#e9eaeb, #e9eaeb) no-repeat 100% 0 / 170px 100%;
}

.panels button {
  width: 80px;
  padding-top: 3px;
  background: #eff0f1;
  color: var(--dim);
}

.panels .w2 {
  width: 95px;
}

.tip {
  width: 301px;
  height: 95px;
  margin: 13px 14px 0 auto;
  padding: 12px 4px 9px 8px;
  display: flex;
  flex-direction: column;
  justify-content: space-between;
  background: #dfe1e3;
  line-height: 15px;
}

.tip a {
  color: #17608f;
}

.datum {
  width: 58px;
  margin-top: 2px;
  padding-top: 6px;
  flex-direction: column;
  justify-content: flex-start;
  border-left: 1px solid #a9b3b3;
}

.datum-icon {
  width: 34px;
  height: 36px;
  margin-bottom: 12px;
}

.datum .caret {
  margin-top: 16px;
}

/* model tree */
.main {
  flex: 1;
  min-height: 0;
  display: flex;
}

.side {
  width: 421px;
  flex: none;
  display: flex;
  flex-direction: column;
  border-right: 3px solid var(--bar);
}

.side-tabs {
  height: 37px;
  flex: none;
  display: flex;
  background: var(--bar);
}

.side-tabs button {
  gap: 7px;
  padding: 0 11px 0 11px;
}

.side-tabs .active {
  background: var(--bg);
}

.side-tabs .folders {
  gap: 5px;
  padding: 0 12px 0 8px;
}

.side-tabs .fav {
  padding: 0 8px;
}

.side-head {
  height: 34px;
  flex: none;
  display: flex;
  align-items: center;
  padding: 0 10px 0 36px;
}

.side-head h2 {
  flex: 1;
}

.side .drop {
  width: 30px;
}

.side-head .hide {
  margin-left: 4px;
}

.side .filter .drop {
  width: 22px;
}

.filter {
  height: 31px;
  flex: none;
  display: flex;
  align-items: center;
  margin-bottom: 6px;
  padding: 0 8px 0 14px;
}

.funnel {
  width: 20px;
  height: 20px;
  margin-right: 4px;
}

.search {
  flex: 1;
  height: 29px;
  display: flex;
  padding-right: 6px;
  border: 1px solid #a5b1b2;
  background: #fff;
}

.search input {
  flex: 1;
  min-width: 0;
  border: 0;
  background: none;
}

.plus {
  width: 28px;
}

.tree {
  flex: 1;
  display: grid;
  grid-template-rows: auto 1fr;
  margin: 0 6px 0 10px;
  min-height: 0;
}

.tree tbody {
  display: flex;
  flex-direction: column;
}

.tree tr {
  display: grid;
  grid-template-columns: 1fr 104px;
  height: 20px;
}

.tree th {
  height: 22px;
  padding: 4px 0 0 6px;
  border-bottom: 1px solid #ccd0d2;
  background: #fafafa;
  color: #222;
  font-size: 13px;
  font-weight: 300;
  text-align: left;
}

.tree thead tr {
  height: 22px;
}

.tree th + th {
  border-left: 1px solid #ccd0d2;
}

.tree td {
  padding: 0;
  line-height: 20px;
  white-space: nowrap;
  overflow: hidden;
}

.tree td + td {
  padding-left: 1px;
  border-left: 1px solid #e4e7e9;
}

.tree td div {
  display: flex;
  align-items: center;
  justify-content: flex-start;
  height: 20px;
  padding-left: 28px;
}

.tree .icon {
  margin-right: 6px;
}

.expand {
  width: 9px;
  height: 11px;
  margin: 0 9px 0 -18px;
}

.tree .latin, .tree .root {
  font-size: 13px;
}

.tree .root {
  color: #cf5450;
}

.root td div {
  padding-left: 3px;
}

.root .icon {
  width: 18px;
  height: 18px;
  margin-right: 9px;
}

.warn {
  width: 10px;
  height: 14px;
}

.star {
  width: 10px;
  height: 10px;
  margin-right: 2px;
}

.off {
  color: #b4b7b8;
}

.tree .insert {
  height: 18px;
}

.insert td {
  display: flex;
  align-items: center;
}

.tree .insert td + td {
  padding: 0;
}

.insert span {
  flex: 1;
  height: 3px;
  margin-bottom: 2px;
  background: var(--green);
}

.tree .rest {
  flex: 1;
}

.scrolls {
  flex: none;
  display: flex;
  height: 18px;
  margin: 0 6px 7px 10px;
}

.scroll {
  display: flex;
  border: 1px solid #d3d7d8;
}

.scroll button {
  width: 17px;
  background: #f1f3f4;
}

.scroll button svg {
  width: 6px;
  height: 9px;
}

.scroll i {
  flex: 1;
  border: solid #d3d7d8;
  border-width: 0 1px;
}

.name-scroll {
  flex: 1;
}

.col-scroll {
  width: 104px;
}

.col-scroll i {
  background: #dfe1e2;
}

.col-scroll b {
  display: block;
  width: 27px;
  height: 16px;
  border: 1px solid #b8bbbd;
  background: #f8f8f8;
}

/* graphics window */
.viewport {
  flex: 1;
  min-width: 0;
  position: relative;
  background: linear-gradient(#9c998b, #c2bfb3 52%, #e2e1d7);
}

.model {
  display: block;
  width: 100%;
  height: 100%;
}

.sketch, .edge, .inner path, .chain, .chain-far, .chain-mid, .chain-back, .cross path {
  fill: none;
  stroke-width: 1px;
  shape-rendering: crispEdges;
}

.sketch {
  stroke: #3f3fd8;
}

.edge {
  stroke: #1d2022;
}

.inner path {
  stroke: #1b1b48;
}

.chain {
  stroke: #f4f236;
}

.chain-far {
  stroke: #f8f8ee;
}

.chain-mid {
  stroke: #efe87c;
}

.chain-back {
  stroke: #55551e;
  stroke-width: 3px;
}

.cross {
  fill: #e0122c;
  stroke: #e0122c;
}

.view-tools {
  position: absolute;
  top: 8px;
  left: 50%;
  transform: translateX(-50%);
  height: 36px;
  display: flex;
  padding: 0 2px;
  background: var(--bg);
}

.view-tools button {
  width: 32px;
  position: relative;
}

.view-tools .more::after {
  content: "";
  position: absolute;
  right: 2px;
  bottom: 5px;
  border: 2px solid #555;
  border-left-color: transparent;
  border-top-color: transparent;
}

/* status bar */
.status {
  height: 30px;
  flex: none;
  display: flex;
  align-items: center;
  gap: 2px;
  padding: 8px 0 0 107px;
  border-top: 1px solid var(--line);
  font-size: 13px;
}

/* failure dialog */
.dialog {
  position: absolute;
  top: 176px;
  right: -1px;
  width: 331px;
  border: 1px solid #abafb1;
  border-radius: 10px;
  background: #eeeff1;
  overflow: hidden;
}

.dialog-title {
  height: 35px;
  display: flex;
  align-items: center;
  padding-right: 8px;
  background: #e6e8e9;
  color: #84888a;
}

.dialog-title h2 {
  flex: 1;
  padding: 2px 0 0 22px;
  text-align: center;
  font-weight: 300;
}

.menu {
  height: 33px;
  display: flex;
  align-items: center;
  gap: 20px;
  padding-left: 11px;
  border-bottom: 1px solid #c5c8ca;
}

.menu button {
  width: 62px;
  justify-content: flex-start;
  color: #b4b8bb;
  font-size: 16px;
}

.dialog-body {
  padding: 19px 8px 23px 12px;
  display: flex;
  flex-direction: column;
  gap: 11px;
}

.issues {
  height: 190px;
  padding: 2px;
  border: 1px solid #abafb1;
  border-spacing: 0;
  table-layout: fixed;
  background: #fff;
  color: #222;
}

.issues th {
  height: 24px;
  padding: 2px 0 0;
  border-right: 1px solid #d0d3d5;
  border-bottom: 1px solid #d0d3d5;
  background: #fafafa;
  font-weight: 300;
}

.issues th + th {
  width: 52px;
}

.issues th:last-child {
  padding-right: 8px;
}

.issues td {
  height: 20px;
  padding: 0;
  line-height: 16px;
  text-align: center;
}

.issues td:first-child {
  padding: 2px 0 0 4px;
  border-right: 1px solid #e4e7e9;
  text-align: left;
}

.issues td.child:first-child {
  padding-left: 27px;
}

.issues .rest td {
  height: auto;
}

.child span {
  display: inline-flex;
  align-items: center;
  gap: 9px;
  padding: 0 2px 0 1px;
}

.child .picked {
  background: #aee0f9;
  color: #54646c;
}

.dot {
  width: 10px;
  height: 10px;
  border-radius: 50%;
}

.yellow {
  border: 2px solid #eba01c;
  background: #ffe820;
}

.red {
  background: #ef3030;
}

.issues input {
  appearance: none;
  display: block;
  width: 13px;
  height: 13px;
  margin: 0 auto;
  border: 1px solid #7c8183;
  background: #fff;
}

.issues input:checked::after {
  content: "";
  display: block;
  width: 5px;
  height: 9px;
  margin: 0 auto;
  border: solid #168a1c;
  border-width: 0 2px 2px 0;
  transform: rotate(40deg);
}

.message {
  display: block;
  height: 128px;
  padding: 4px 3px;
  resize: none;
  border: 1px solid #abafb1;
  background: #f3f3f3;
  line-height: 15px;
}

.dialog-foot {
  display: flex;
  justify-content: flex-end;
  gap: 10px;
  padding: 12px 8px;
  border-top: 1px solid #c5c8ca;
}

.dialog-foot button {
  width: 54px;
  height: 25px;
  padding-top: 2px;
  border: 1px solid #abafb1;
  background: #f8f8f9;
}

/* forum watermark */
.watermark {
  position: absolute;
  right: 18px;
  bottom: 7px;
  width: 168px;
  font-style: italic;
}

.mark {
  position: relative;
  color: #000;
  font-size: 41px;
  font-weight: 400;
  line-height: 48px;
  white-space: nowrap;
}

.mark span {
  color: #ff6a36;
}

.flame {
  position: absolute;
  left: 63px;
  top: -11px;
  width: 18px;
  height: 42px;
}

.url {
  padding-left: 2px;
  color: #8c8e8f;
  font: italic 18px/18px "Liberation Sans", sans-serif;
}
```
